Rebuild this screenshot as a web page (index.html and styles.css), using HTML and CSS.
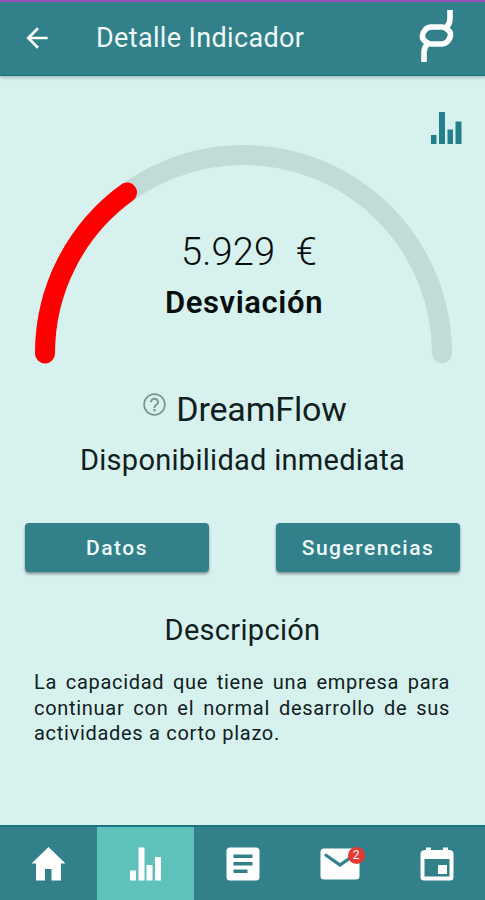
FILE: index.html
```html
<!DOCTYPE html>
<html lang="es">
<head>
<meta charset="utf-8">
<title>Detalle Indicador</title>
<link rel="stylesheet" href="styles.css">
</head>
<body>
<div class="app">
  <header class="header">
    <svg class="back" viewBox="0 0 24 24" width="32" height="32"><path fill="#fff" d="M20 11H7.830l5.590-5.590L12 4l-8 8 8 8 1.410-1.410L7.830 13H20v-2z"/></svg>
    <h1 class="title">Detalle Indicador</h1>
    <svg class="logo" viewBox="0 0 36 54" width="36" height="54"><g fill="none" stroke="#fff" stroke-width="5.600"><path d="M5 53V43Q5 38 9 34.500"/><path d="M12 35H23Q26 35 28.500 32.500T31.500 26.500T28.500 20.500T23 18H12Q9 18 6.500 20.500T3.500 26.500T6.500 32.500T12 35Z"/><path d="M31 1V10Q31 15 27 18.500"/></g></svg>
  </header>
  <main class="content">
    <div class="tools">
      <svg viewBox="0 0 32 34" width="32" height="34"><path fill="#24808a" d="M0 24h5.500v9H0zM8 1h6v32H8zM16.500 18.500H22V33h-5.500zM24.500 10.500h6V33h-6z"/></svg>
    </div>
    <section class="gauge">
      <svg class="arc" viewBox="0 0 420 220" width="420" height="220"><g fill="none" stroke-linecap="round" stroke-width="20"><path stroke="#c1dcd7" d="M10 208.500A198.500 198.500 0 0 1 407 208.500"/><path stroke="#f00" d="M10 208.500A198.500 198.500 0 0 1 92 47.500"/></g></svg>
      <div class="reading">
        <p class="value">5.929 <span class="unit">€</span></p>
        <p class="label">Desviación</p>
      </div>
    </section>
    <h2 class="name"><svg class="help" viewBox="0 0 24 24" width="27" height="27"><path fill="#7f9290" d="M11 18h2v-2h-2v2zm1-16C6.480 2 2 6.480 2 12s4.480 10 10 10 10-4.480 10-10S17.520 2 12 2zm0 18.400c-4.630 0-8.400-3.770-8.400-8.400S7.370 3.600 12 3.600s8.400 3.770 8.400 8.400-3.770 8.400-8.400 8.400zM12 6c-2.210 0-4 1.790-4 4h1.700c0-1.250 1.050-2.300 2.300-2.300s2.300 1.050 2.300 2.300c0 2-3.150 1.750-3.150 5h1.700c0-2.250 3.150-2.500 3.150-5 0-2.210-1.790-4-4-4z"/></svg><span>DreamFlow</span></h2>
    <p class="subtitle">Disponibilidad inmediata</p>
    <div class="actions">
      <button class="button">Datos</button>
      <button class="button">Sugerencias</button>
    </div>
    <h3 class="heading">Descripción</h3>
    <p class="description">La capacidad que tiene una empresa para continuar con el normal desarrollo de sus actividades a corto plazo.</p>
  </main>
  <nav class="nav">
    <a class="tab"><svg viewBox="0 0 36 34" width="36" height="34"><path fill="#fff" d="M17.500 0 34.500 16.500H30V33.500H20.500V22H14V33.500H5V16.500H.5z"/></svg></a>
    <a class="tab active"><svg viewBox="0 0 32 34" width="32" height="34"><path fill="#fff" d="M0 23.500h6v10H0zM8.500 .5h6v33h-6zM16.500 18h6v15.500h-6zM25 10h6v23.500h-6z"/></svg></a>
    <a class="tab"><svg viewBox="0 0 34 34" width="34" height="34"><path fill="#fff" fill-rule="evenodd" d="M4 .5H30Q33.500 .5 33.500 4V30Q33.500 33.500 30 33.500H4Q.5 33.500 .5 30V4Q.5 .5 4 .5zM7.500 7.500v3.500h19V7.500zM7.500 15v3.500h19V15zM7.500 22.500V26h14v-3.500z"/></svg></a>
    <a class="tab"><span class="mail"><svg viewBox="0 0 40 32" width="40" height="32"><rect x=".5" y=".5" width="39" height="31" rx="3.500" fill="#fff"/><path fill="none" stroke="#31808a" stroke-width="3.200" d="M5 6.500 20 17 35 6.500"/></svg><span class="badge">2</span></span></a>
    <a class="tab"><svg viewBox="0 0 34 34" width="34" height="34"><path fill="#fff" fill-rule="evenodd" d="M6 .5h5V3h12V.5h5V3h1.500Q33.500 3.500 33.500 7V30Q33.500 33.500 30 33.500H4Q.5 33.500 .5 30V7Q.5 3.500 4.500 3H6zM4.500 12v17.500h25V12zM18 18h9v9h-9z"/></svg></a>
  </nav>
</div>
</body>
</html>
```
FILE: styles.css
```css
* { box-sizing: border-box; }
body { margin: 0; font-family: Roboto, "Liberation Sans", sans-serif; color: #10201f; background: #d7f2ee; }
h1, h2, h3, p { margin: 0; font-weight: 400; white-space: nowrap; }
svg { display: block; flex: none; }
.app { display: flex; flex-direction: column; width: 485px; height: 900px; overflow: hidden; }
.header { display: flex; align-items: center; height: 76px; flex: none; padding: 0 30px 2px 21px; border-top: 2px solid #9750b8; border-bottom: 1px solid #1b7580; background: #31808a; box-shadow: 0 1px 4px rgba(0, 0, 0, .3); color: #effbfa; }
.title { margin-left: 43px; font-size: 27px; line-height: 36px; letter-spacing: .35px; }
.logo { margin: -4px 0 0 auto; }
.content { display: flex; flex-direction: column; flex: 1; padding: 35px 25px 0; }
.tools { display: flex; justify-content: flex-end; height: 34px; margin-right: -3px; }
.gauge { display: grid; height: 220px; margin-left: 10px; width: 420px; }
.arc { overflow: visible; }
.arc, .reading { grid-area: 1 / 1; }
.reading { padding-top: 84px; width: 418px; text-align: center; color: #050d0d; }
.value { padding-left: 10px; font-size: 38px; line-height: 46px; font-weight: 300; letter-spacing: .2px; }
.unit { margin-left: 11px; }
.label { margin-top: 6px; font-size: 31px; line-height: 44px; font-weight: 600; letter-spacing: .6px; }
.name { display: flex; justify-content: center; gap: 8px; margin: 22px -3px 0 0; font-size: 34px; line-height: 44px; letter-spacing: -.15px; }
.help { margin-top: 4px; }
.subtitle { margin-top: 11px; text-align: center; font-size: 29px; line-height: 36px; letter-spacing: .28px; }
.actions { display: flex; justify-content: space-between; margin-top: 45px; }
.button { width: 184px; height: 49px; padding: 0; border: 0; border-radius: 4px; background: #31808a; color: #effbfa; font: 500 21px Roboto, "Liberation Sans", sans-serif; letter-spacing: 1.500px; box-shadow: 0 2px 3px rgba(0, 0, 0, .4); }
.heading { margin-top: 40px; text-align: center; font-size: 29px; line-height: 36px; letter-spacing: .3px; }
.description { width: 416px; margin: 22px 0 0 9px; font-size: 20px; line-height: 25.600px; letter-spacing: .7px; text-align: justify; white-space: normal; }
.nav { display: grid; grid-template-columns: repeat(5, 1fr); height: 75px; flex: none; border-top: 2px solid #1b7580; background: #31808a; }
.tab { display: flex; align-items: center; justify-content: center; padding-top: 1px; }
.active { background: #5ec2ba; }
.mail { position: relative; }
.badge { position: absolute; top: -1px; right: -5px; width: 17px; height: 17px; border-radius: 50%; background: #e53935; color: #fff; font-size: 12px; line-height: 17px; text-align: center; }
```
